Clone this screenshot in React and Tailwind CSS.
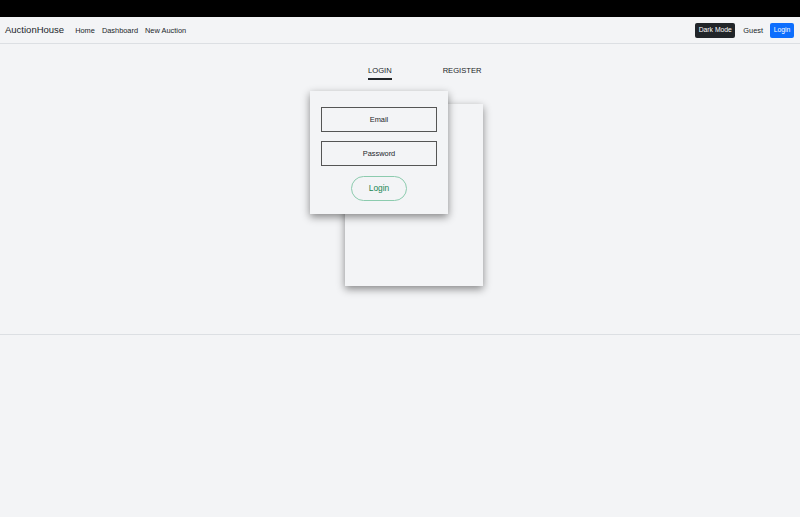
import React, { useState } from 'react';

const App = () => {
  const [tab, setTab] = useState('login');

  return (
    <div className="min-h-screen bg-[#f3f4f6] text-[#212529]" style={{ fontFamily: '"Liberation Sans", Arial, sans-serif' }}>
      <div className="h-[17px] bg-black" />

      {/* Navbar */}
      <nav className="h-[27px] border-b border-[#dcdfe3] flex items-center pl-[5px] pr-[6px] pt-[1px]">
        <span className="text-[9.5px] mr-[11px]">AuctionHouse</span>
        <div className="flex items-center gap-[7px] text-[7.4px]">
          <a>Home</a>
          <a>Dashboard</a>
          <a>New Auction</a>
        </div>
        <div className="ml-auto flex items-center">
          <button className="h-[15px] w-[40px] bg-[#212529] text-white text-[6.8px] rounded-[2px]">Dark Mode</button>
          <span className="text-[7.4px] ml-[8px] mr-[7px]">Guest</span>
          <button className="h-[15px] w-[24px] bg-[#0d6efd] text-white text-[6.8px] rounded-[2px]">Login</button>
        </div>
      </nav>

      {/* Main */}
      <main className="h-[290px] pt-[22px]">
        <div className="flex ml-[368px] gap-[51px] text-[7.6px] leading-[10px]">
          <button onClick={() => setTab('login')} className="flex flex-col items-stretch">
            <span>LOGIN</span>
            <span className={'mt-[2px] h-[1.5px] ' + (tab === 'login' ? 'bg-[#212529]' : 'bg-transparent')} />
          </button>
          <button onClick={() => setTab('register')} className="flex flex-col items-stretch">
            <span>REGISTER</span>
            <span className={'mt-[2px] h-[1.5px] ' + (tab === 'register' ? 'bg-[#212529]' : 'bg-transparent')} />
          </button>
        </div>

        <div className="relative ml-[310px] mt-[11px] w-[173px] h-[195px]">
          <div className="absolute left-[35px] top-[13px] w-[138px] h-[182px] bg-[#f3f4f6] shadow-[0_3px_8px_rgba(0,0,0,0.45)]" />
          <div className="relative w-[138px] h-[123px] bg-[#f3f4f6] shadow-[0_3px_8px_rgba(0,0,0,0.45)] pt-[16px] px-[11px] flex flex-col items-center">
            <div className="w-[116px] h-[25px] border border-[#555] flex items-center justify-center text-[7.4px] pt-[2px]">Email</div>
            <div className="mt-[9px] w-[116px] h-[25px] border border-[#555] flex items-center justify-center text-[7.4px] pt-[2px]">Password</div>
            <button className="mt-[10px] w-[56px] h-[25px] rounded-full border border-[#8ccbae] text-[#198754] text-[8.4px] pt-[1px]">Login</button>
          </div>
        </div>
      </main>

      <div className="border-t border-[#dcdfe3]" />
    </div>
  );
};

export default App;
